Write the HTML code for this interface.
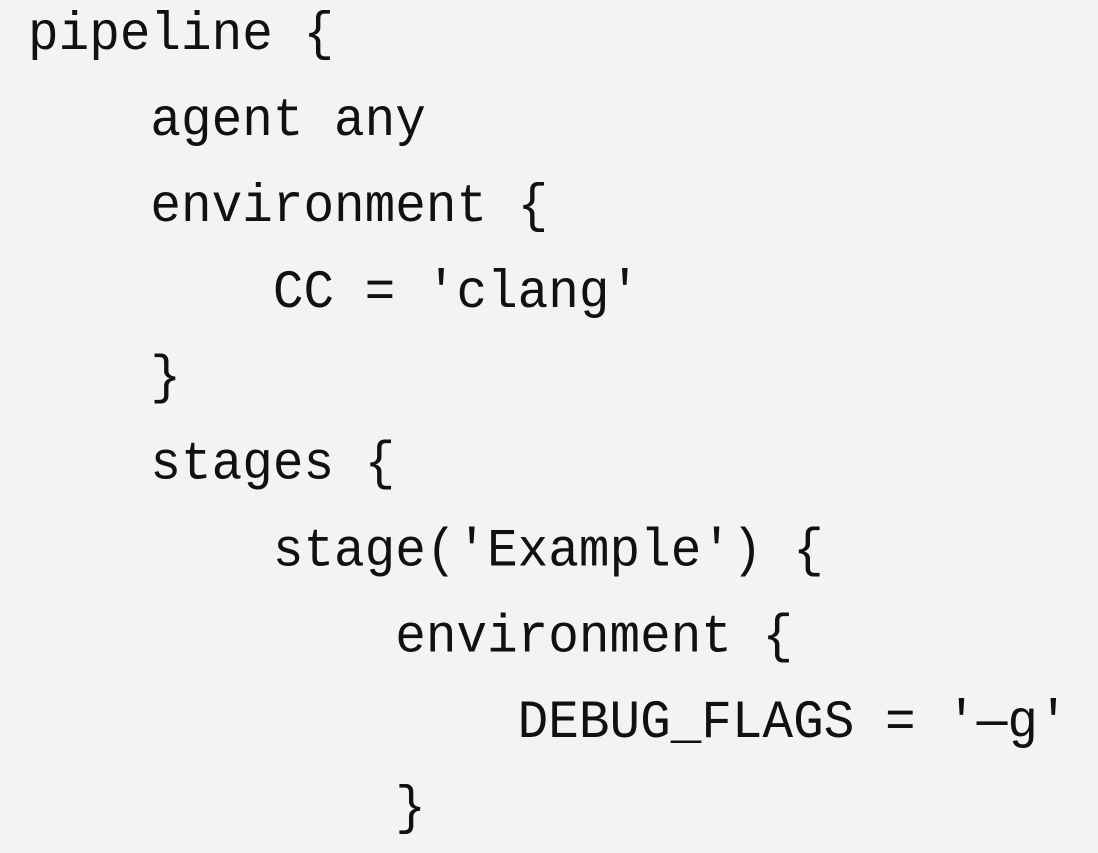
<!DOCTYPE html>
<html><head><meta charset="utf-8"><style>
html,body{margin:0;padding:0;width:1098px;height:832px;overflow:hidden;background:#f3f3f3;}
pre{position:absolute;left:28px;top:-7px;margin:0;font-family:"Liberation Mono","DejaVu Sans Mono",monospace;font-size:51px;line-height:81.1px;color:#111;transform:scaleY(1.06);transform-origin:0 0;}
</style></head><body>
<pre>pipeline {
    agent any
    environment {
        CC = 'clang'
    }
    stages {
        stage('Example') {
            environment {
                DEBUG_FLAGS = '—g'
            }</pre>
</body></html>
